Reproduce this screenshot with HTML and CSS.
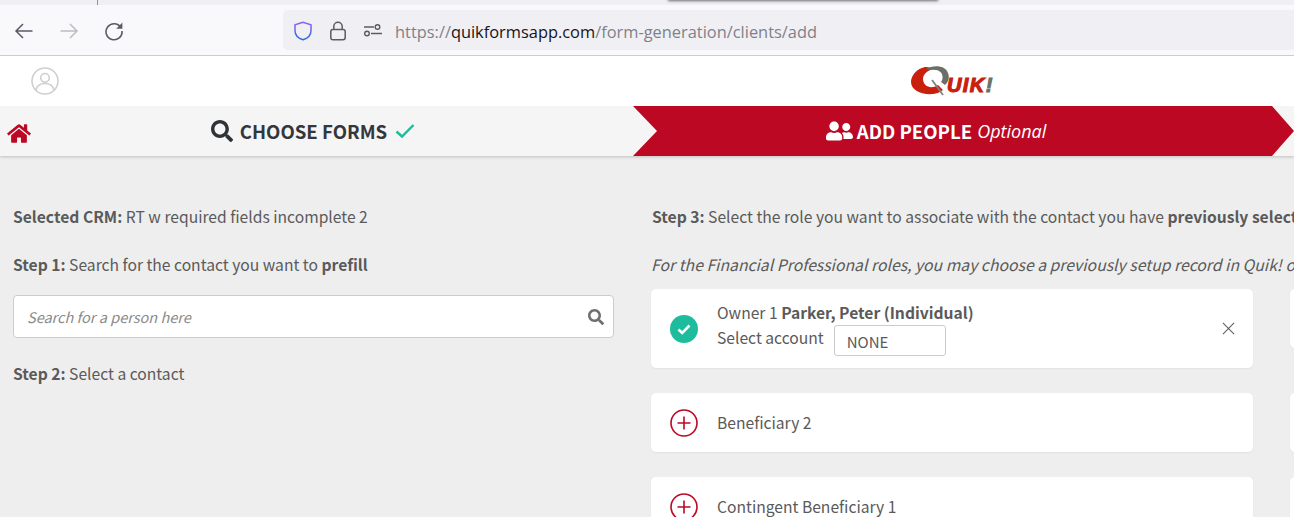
FILE: index.html
```html
<!DOCTYPE html>
<html lang="en">
<head>
<meta charset="utf-8">
<title>Quik! Forms</title>
<link rel="stylesheet" href="styles.css">
</head>
<body>
<div class="tabstrip"><span class="tab-sep"></span><span class="popup-shadow"></span></div>
<div class="toolbar">
  <div class="nav">
    <svg class="nav-icon" viewBox="0 0 20 20"><path d="M18.5 10H2M9 3l-7 7 7 7" fill="none" stroke="#5b5b66" stroke-width="1.5"/></svg>
    <svg class="nav-icon" viewBox="0 0 20 20"><path d="M1.5 10H18M11 3l7 7-7 7" fill="none" stroke="#bdbdc2" stroke-width="1.5"/></svg>
    <svg class="nav-icon" viewBox="0 0 20 20"><path d="M16.8 6.5A8 8 0 1 0 18 10" fill="none" stroke="#5b5b66" stroke-width="1.6"/><path d="M18.4 1.6v6.2h-6.2z" fill="#5b5b66"/></svg>
  </div>
  <div class="urlbar">
    <svg class="shield" viewBox="0 0 20 20"><defs><linearGradient id="sg" x1="0" y1="0" x2="0" y2="1"><stop offset="0" stop-color="#8f63f0"/><stop offset="1" stop-color="#2d6be0"/></linearGradient></defs><path d="M10 1.3 2 3.8v6c0 4.6 3.6 7.6 8 9 4.4-1.400 8-4.400 8-9v-6z" fill="none" stroke="url(#sg)" stroke-width="1.500"/></svg>
    <svg class="lock" viewBox="0 0 18 20"><rect x="1.800" y="8.500" width="14.400" height="10.300" rx="2.200" fill="none" stroke="#5b5b66" stroke-width="1.500"/><path d="M4.800 8.500V5.500a4.200 4.200 0 0 1 8.400 0v3" fill="none" stroke="#5b5b66" stroke-width="1.500"/></svg>
    <svg class="perm" viewBox="0 0 20 16"><circle cx="14.500" cy="4" r="2.300" fill="none" stroke="#5b5b66" stroke-width="1.400"/><circle cx="4" cy="10.500" r="2.300" fill="none" stroke="#5b5b66" stroke-width="1.400"/><path d="M1 4h10M8 10.500h11" stroke="#5b5b66" stroke-width="1.400"/></svg>
    <span class="url"><span class="url-dim">https://</span><span class="url-host">quikformsapp.com</span><span class="url-dim">/form-generation/clients/add</span></span>
  </div>
</div>
<header class="appbar">
  <svg class="avatar" viewBox="0 0 28 28"><circle cx="14" cy="14" r="13" fill="none" stroke="#cfcfcf" stroke-width="1.600"/><circle cx="14" cy="10.800" r="4.300" fill="none" stroke="#cfcfcf" stroke-width="1.600"/><path d="M5 23c1-4.500 4.500-6.500 9-6.500s8 2 9 6.500" fill="none" stroke="#cfcfcf" stroke-width="1.600"/></svg>
  <div class="logo">
    <svg class="logo-q" viewBox="0 0 40 30"><path d="M14 1C5 3 0 10 0 16c0 8 10 13 22 12 4-.4 7-1.500 10-4l-5-5c-7 5-15 1-15-6 0-5 5-9 11-10-3-1-6-2.500-9-2z" fill="#c8200d"/><path d="M15 3c7-4 19-4 22 4 2 5 0 10-3 12l-4-3c3-4 2-11-5-12-5-.5-8 0-10-1z" fill="#6a7068"/><path d="M21 14l11 15" stroke="#7c827b" stroke-width="1.800"/></svg>
    <span class="logo-text">UIK<span class="logo-bang">!</span></span>
  </div>
</header>
<nav class="stepper">
  <div class="step step-done">
    <svg class="home" viewBox="0 0 576 512"><path fill="#bc0823" d="M280.37 148.26L96 300.11V464a16 16 0 0 0 16 16l112.06-.29a16 16 0 0 0 15.92-16V368a16 16 0 0 1 16-16h64a16 16 0 0 1 16 16v95.64a16 16 0 0 0 16 16.05L464 480a16 16 0 0 0 16-16V300L295.67 148.26a12.19 12.19 0 0 0-15.3 0zM571.6 251.47L488 182.56V44.05a12 12 0 0 0-12-12h-56a12 12 0 0 0-12 12v72.61L318.47 43a48 48 0 0 0-61 0L4.34 251.47a12 12 0 0 0-1.6 16.9l25.5 31A12 12 0 0 0 45.15 301l235.22-193.74a12.19 12.19 0 0 1 15.3 0L530.9 301a12 12 0 0 0 16.9-1.6l25.5-31a12 12 0 0 0-1.7-16.93z"/></svg>
    <svg class="step-search" viewBox="0 0 512 512"><path fill="#2f3338" d="M505 442.7L405.3 343c-4.500-4.500-10.600-7-17-7H372c27.600-35.300 44-79.700 44-128C416 93.100 322.900 0 208 0S0 93.100 0 208s93.100 208 208 208c48.300 0 92.700-16.400 128-44v16.300c0 6.400 2.500 12.500 7 17l99.700 99.700c9.400 9.400 24.600 9.400 33.900 0l28.300-28.300c9.400-9.400 9.400-24.600.1-34zM208 336c-70.700 0-128-57.200-128-128 0-70.700 57.200-128 128-128 70.700 0 128 57.200 128 128 0 70.700-57.200 128-128 128z"/></svg>
    <span class="step-label">CHOOSE FORMS</span>
    <svg class="step-check" viewBox="0 0 20 16"><path d="M1.500 8.500l5.500 5L18.500 2" fill="none" stroke="#1dbc9c" stroke-width="2.400"/></svg>
  </div>
  <div class="step step-active">
    <svg class="people" viewBox="0 0 640 512"><path fill="#fff" d="M192 256c61.900 0 112-50.100 112-112S253.900 32 192 32 80 82.100 80 144s50.100 112 112 112zm76.800 32h-8.300c-20.800 10-43.900 16-68.500 16s-47.600-6-68.500-16h-8.300C51.600 288 0 339.600 0 403.200V432c0 26.500 21.500 48 48 48h288c26.500 0 48-21.500 48-48v-28.800c0-63.600-51.600-115.200-115.200-115.200zM480 256c53 0 96-43 96-96s-43-96-96-96-96 43-96 96 43 96 96 96zm48 32h-3.800c-13.900 4.800-28.600 8-44.200 8s-30.300-3.200-44.200-8H432c-20.400 0-39.200 5.900-55.700 15.400 24.400 26.300 39.700 61.200 39.700 99.800v38.400c0 2.200-.5 4.300-.6 6.400H592c26.500 0 48-21.500 48-48 0-61.900-50.100-112-112-112z"/></svg>
    <span class="step-label">ADD PEOPLE</span>
    <em class="step-note">Optional</em>
  </div>
</nav>
<main class="content">
  <section class="col-left">
    <p class="line"><b>Selected CRM:</b> RT w required fields incomplete 2</p>
    <p class="line line-tight"><b>Step 1:</b> Search for the contact you want to <b>prefill</b></p>
    <div class="search">
      <span class="placeholder">Search for a person here</span>
      <svg class="search-icon" viewBox="0 0 512 512"><path fill="#6f6f6f" d="M505 442.700L405.300 343c-4.500-4.500-10.600-7-17-7H372c27.600-35.300 44-79.700 44-128C416 93.100 322.900 0 208 0S0 93.100 0 208s93.100 208 208 208c48.300 0 92.700-16.400 128-44v16.300c0 6.400 2.500 12.500 7 17l99.700 99.700c9.400 9.400 24.600 9.400 33.900 0l28.300-28.300c9.400-9.400 9.400-24.600.1-34zM208 336c-70.700 0-128-57.200-128-128 0-70.700 57.200-128 128-128 70.700 0 128 57.200 128 128 0 70.700-57.200 128-128 128z"/></svg>
    </div>
    <p class="line"><b>Step 2:</b> Select a contact</p>
  </section>
  <section class="col-right">
    <p class="line line-right"><b>Step 3:</b> Select the role you want to associate with the contact you have <b>previously selected</b></p>
    <p class="line line-note"><i>For the Financial Professional roles, you may choose a previously setup record in Quik! or search for a contact</i></p>
    <div class="cards">
      <div class="card card-tall">
        <svg class="role-icon" viewBox="0 0 28 28"><circle cx="14" cy="14" r="14" fill="#1dbc9c"/><path d="M8.500 14.500l3.700 3.500 7.300-7.500" fill="none" stroke="#fff" stroke-width="2.600"/></svg>
        <div class="card-body card-body-tall">
          <div>Owner 1 <b>Parker, Peter (Individual)</b></div>
          <div class="account">Select account <span class="select">NONE</span></div>
        </div>
        <svg class="close" viewBox="0 0 14 14"><path d="M1 1l12 12M13 1L1 13" stroke="#5f6368" stroke-width="1.200" fill="none"/></svg>
      </div>
      <div class="card-stub stub-tall"></div>
      <div class="card">
        <svg class="role-icon" viewBox="0 0 28 28"><circle cx="14" cy="14" r="13" fill="none" stroke="#bc0823" stroke-width="1.600"/><path d="M14 7.500v13M7.500 14h13" stroke="#bc0823" stroke-width="1.600"/></svg>
        <div class="card-body">Beneficiary 2</div>
      </div>
      <div class="card-stub"></div>
      <div class="card">
        <svg class="role-icon" viewBox="0 0 28 28"><circle cx="14" cy="14" r="13" fill="none" stroke="#bc0823" stroke-width="1.600"/><path d="M14 7.500v13M7.500 14h13" stroke="#bc0823" stroke-width="1.600"/></svg>
        <div class="card-body">Contingent Beneficiary 1</div>
      </div>
      <div class="card-stub"></div>
    </div>
  </section>
</main>
</body>
</html>
```

FILE: styles.css
```css
* { box-sizing: border-box; }
html, body { height: 100%; }
body {
  margin: 0;
  overflow: hidden;
  background: #eee;
  color: #5a5a5a;
  font-family: "Noto Sans CJK SC", "Source Sans Pro", "Noto Sans", sans-serif;
  font-size: 15.65px;
  line-height: 24px;
}
svg { display: block; flex: none; }

.tabstrip {
  position: relative;
  height: 5px;
  background: #f0f0f4;
}
.tab-sep {
  position: absolute;
  left: 97px;
  top: 0;
  width: 1px;
  height: 5px;
  background: #8f8f9d;
}
.popup-shadow {
  position: absolute;
  left: 668px;
  top: -4px;
  width: 270px;
  height: 4px;
  box-shadow: 0 1px 3px rgba(0,0,0,.55);
}

.toolbar {
  display: flex;
  align-items: center;
  height: 51px;
  background: #f9f9fb;
  border-bottom: 1px solid #ccc;
}
.nav {
  display: flex;
  align-items: center;
  gap: 25px;
  width: 283px;
  padding: 2px 0 0 14px;
}
.nav-icon { width: 20px; height: 20px; }
.urlbar {
  flex: 1;
  display: flex;
  align-items: center;
  height: 40px;
  padding: 2px 0 0 10px;
  background: #f0f0f4;
  border-radius: 5px 0 0 5px;
  font-family: "Open Sans", "Noto Sans", sans-serif;
  font-size: 16.4px;
}
.shield { width: 20px; height: 20px; }
.lock { width: 18px; height: 20px; margin-left: 16px; }
.perm { width: 20px; height: 16px; margin-left: 16px; }
.url { margin: 1px 0 0 12px; white-space: nowrap; }
.url-dim { color: #80808a; }
.url-host { color: #15141a; }

.appbar {
  position: relative;
  z-index: 1;
  display: flex;
  align-items: center;
  height: 50px;
  background: #fff;
  padding-left: 31px;
}
.avatar { width: 28px; height: 28px; }
.logo {
  position: absolute;
  left: 911px;
  top: 10px;
  display: flex;
  align-items: flex-end;
}
.logo-q { width: 40px; height: 30px; }
.logo-text {
  margin-left: -4px;
  margin-bottom: 1px;
  color: #c8200d;
  font-family: "Liberation Sans", sans-serif;
  font-size: 20px;
  line-height: 20px;
  font-weight: 700;
  font-style: italic;
  letter-spacing: 1.4px;
  -webkit-text-stroke: 1.1px #c8200d;
}
.logo-bang { color: #6a7068; -webkit-text-stroke-color: #6a7068; }

.stepper {
  display: flex;
  height: 50px;
  background: #f5f5f5;
  box-shadow: 0 1px 3px rgba(0,0,0,.2);
  font-size: 18.6px;
  font-weight: 600;
}
.step {
  display: flex;
  align-items: center;
  height: 50px;
}
.step-done {
  position: relative;
  width: 633px;
  justify-content: center;
  color: #33373c;
}
.home {
  position: absolute;
  left: 7px;
  top: 17px;
  width: 24px;
  height: 21px;
}
.step-search { width: 22px; height: 22px; margin-right: 7px; margin-left: -7px; }
.step-check { width: 20px; height: 16px; margin-left: 8px; }
.step-active {
  flex: 1;
  justify-content: center;
  padding-right: 55px;
  background: #bc0823;
  color: #fff;
  clip-path: polygon(0 0, calc(100% - 22px) 0, 100% 50%, calc(100% - 22px) 100%, 0 100%, 24px 50%);
}
.people { width: 27px; height: 22px; margin-right: 4px; }
.step-note {
  margin-left: 5px;
  font-family: "Open Sans", sans-serif;
  font-size: 18px;
  font-weight: 400;
}

.content {
  display: flex;
  align-items: flex-start;
  padding: 49px 0 0 13px;
}
.col-left { flex: none; width: 601px; margin-right: 37px; }
.col-right { flex: none; width: 1300px; }
.line { margin: 0 0 24px; white-space: nowrap; }
.line-tight { margin-bottom: 18px; }
.line-right { padding-left: 1px; }
.line-note { font-size: 15.75px; }
b { font-weight: 700; }

.search {
  display: flex;
  align-items: center;
  justify-content: space-between;
  height: 43px;
  margin-bottom: 24px;
  padding: 0 9px 0 13px;
  background: #fff;
  border: 1px solid #ccc;
  border-radius: 4px;
}
.placeholder { color: #8a8a8a; font-style: italic; font-size: 14.5px; }
.search-icon { width: 16px; height: 16px; }

.cards {
  display: grid;
  grid-template-columns: 602px 602px;
  column-gap: 37px;
  row-gap: 25px;
  margin-top: -12px;
}
.card, .card-stub {
  background: #fff;
  border-radius: 5px;
  box-shadow: 0 1px 2px rgba(0,0,0,.05);
  min-height: 59px;
}
.card {
  display: flex;
  align-items: center;
  padding: 0 18px 0 19px;
}
.card-tall { height: 79px; }
.stub-tall { height: 59px; }
.role-icon { width: 28px; height: 28px; }
.card-body { flex: 1; margin-left: 19px; }
.card-body-tall { padding-bottom: 5px; }
.account { display: flex; align-items: center; }
.select {
  display: block;
  width: 112px;
  height: 31px;
  margin-left: 10px;
  margin-bottom: -5px;
  padding-left: 12px;
  line-height: 32px;
  font-size: 15px;
  background: #fff;
  border: 1px solid #ccc;
  border-radius: 3px;
}
.close { width: 13px; height: 13px; }
```
